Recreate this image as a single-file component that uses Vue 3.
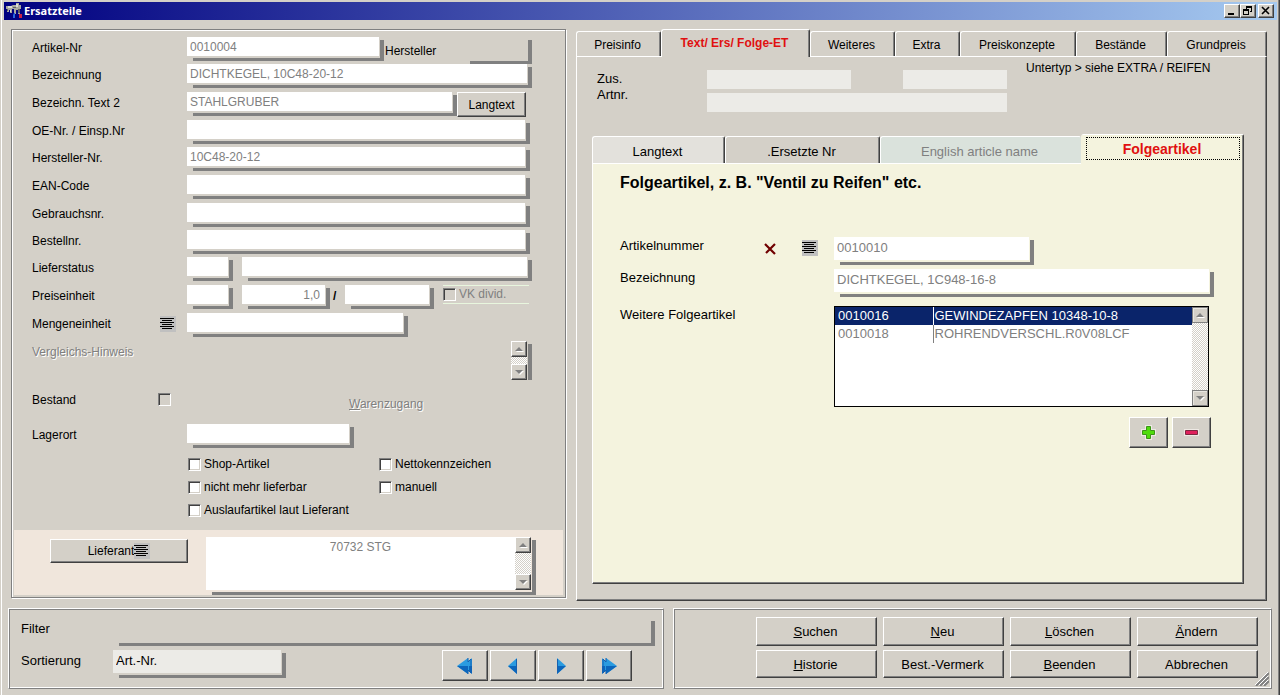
<script setup>
import { ref } from 'vue'

const plainRows = [
  { id: 'oe', label: 'OE-Nr. / Einsp.Nr', value: '' },
  { id: 'herstnr', label: 'Hersteller-Nr.', value: '10C48-20-12' },
  { id: 'ean', label: 'EAN-Code', value: '' },
  { id: 'gebrauch', label: 'Gebrauchsnr.', value: '' },
  { id: 'bestell', label: 'Bestellnr.', value: '' },
]
const flags = [
  { id: 'shop', label: 'Shop-Artikel' },
  { id: 'netto', label: 'Nettokennzeichen' },
  { id: 'nml', label: 'nicht mehr lieferbar' },
  { id: 'manuell', label: 'manuell' },
  { id: 'auslauf', label: 'Auslaufartikel laut Lieferant' },
]
const tabs = ['Preisinfo', 'Text/ Ers/ Folge-ET', 'Weiteres', 'Extra', 'Preiskonzepte', 'Bestände', 'Grundpreis']
const activeTab = ref(1)
const subTabs = ['Langtext', '.Ersetzte Nr', 'English article name', 'Folgeartikel']
const activeSub = ref(3)
const supplier = ref('70732 STG')
const followers = [
  { nr: '0010016', name: 'GEWINDEZAPFEN 10348-10-8' },
  { nr: '0010018', name: 'ROHRENDVERSCHL.R0V08LCF' },
]
const selected = ref(0)
const actions = [
  ['S', 'uchen'], ['N', 'eu'], ['L', 'öschen'], ['Ä', 'ndern'],
  ['H', 'istorie'], ['', 'Best.-Vermerk'], ['B', 'eenden'], ['', 'Abbrechen'],
]
const nav = [
  { label: 'Erster', dir: 'left', double: true },
  { label: 'Zurück', dir: 'left', double: false },
  { label: 'Weiter', dir: 'right', double: false },
  { label: 'Letzter', dir: 'right', double: true },
]
</script>

<template>
  <div class="window">
    <header class="titlebar">
      <svg class="app-icon" width="16" height="16" viewBox="0 0 16 16" aria-hidden="true">
        <path d="M0 3h5l2-1h3V0h3v2h2v4h-1v5h-2V7h-2v4H8V6H6v4H4V7H3v2H1V6H0z" fill="#a8a8a0" />
        <path d="M2 3h4v2H2zM10 1h2v3h-2zM4 7h1v2H4z" fill="#dcdcd4" />
        <path d="M1 6h1v2H1zM7 4h3v1H7zM12 6h2v4h-2z" fill="#606068" />
        <path d="M8 10h1v5H7v-3z" fill="#2868e0" />
        <path d="M13 11h3v4h-3z" fill="#c82048" />
      </svg>
      <h1>Ersatzteile</h1>
      <div class="win-buttons">
        <button type="button" aria-label="Minimieren">
          <svg width="12" height="10" viewBox="0 0 12 10"><path d="M2 7h6v2H2z" /></svg>
        </button>
        <button type="button" aria-label="Wiederherstellen">
          <svg width="12" height="10" viewBox="0 0 12 10">
            <path d="M4 0h6v6H8V5h1V2H5v1H4zM1 3h6v6H1zM2 5v3h4V5z" fill-rule="evenodd" />
          </svg>
        </button>
        <button type="button" class="close" aria-label="Schließen">
          <svg width="12" height="10" viewBox="0 0 12 10"><path d="M2 1l7 7M9 1L2 8" stroke="#000" stroke-width="1.600" /></svg>
        </button>
      </div>
    </header>

    <main class="main">
      <section class="article">
        <div class="form">
          <label for="artnr">Artikel-Nr</label>
          <div class="cell">
            <span class="field w-art"><input id="artnr" value="0010004" readonly></span>
            <label for="hersteller" class="inner-label">Hersteller</label>
            <span class="field ghost push w-herst"><input id="hersteller" readonly></span>
          </div>

          <label for="bez">Bezeichnung</label>
          <div class="cell"><span class="field grow"><input id="bez" value="DICHTKEGEL, 10C48-20-12" readonly></span></div>

          <label for="bez2">Bezeichn. Text 2</label>
          <div class="cell">
            <span class="field grow"><input id="bez2" value="STAHLGRUBER" readonly></span>
            <button type="button" class="btn langtext">Langtext</button>
          </div>

          <template v-for="r in plainRows" :key="r.id">
            <label :for="r.id">{{ r.label }}</label>
            <div class="cell short"><span class="field grow"><input :id="r.id" :value="r.value" readonly></span></div>
          </template>

          <label for="lstatus">Lieferstatus</label>
          <div class="cell gap">
            <span class="field w-code"><input id="lstatus" readonly></span>
            <span class="field grow"><input aria-label="Lieferstatus Text" readonly></span>
          </div>

          <label for="preis">Preiseinheit</label>
          <div class="cell gap">
            <span class="field w-code"><input id="preis" readonly></span>
            <span class="field w-price"><input class="right" aria-label="Preiseinheit Faktor" value="1,0" readonly></span>
            <span class="slash">/</span>
            <span class="field grow"><input aria-label="Preiseinheit Divisor" readonly></span>
            <label class="divid"><input type="checkbox" class="check dim" disabled><span>VK divid.</span></label>
          </div>

          <div class="label-with-icon">
            <label for="menge">Mengeneinheit</label>
            <button type="button" class="list-icon" aria-label="Mengeneinheit wählen">
              <svg width="16" height="16" viewBox="0 0 16 16"><path d="M0 2h14v1H0zM2 4h10v1H2zM0 6h14v1H0zM2 8h10v1H2zM0 10h14v1H0zM2 12h10v1H2z" /></svg>
            </button>
          </div>
          <div class="cell"><span class="field w-menge"><input id="menge" readonly></span></div>

          <label for="hinweis" class="off">Vergleichs-Hinweis</label>
          <div class="cell">
            <span class="field ghost grow memo">
              <textarea id="hinweis" readonly></textarea>
              <span class="scroll">
                <button type="button" aria-label="Nach oben"><svg width="8" height="4" viewBox="0 0 8 4"><path d="M0 4l4-4 4 4z" /></svg></button>
                <button type="button" aria-label="Nach unten"><svg width="8" height="4" viewBox="0 0 8 4"><path d="M0 0l4 4 4-4z" /></svg></button>
              </span>
            </span>
          </div>

          <div class="label-with-icon">
            <label for="bestand">Bestand</label>
            <input id="bestand" type="checkbox" class="check dim stock">
          </div>
          <div class="cell"><a href="#" class="off stock-link"><u>W</u>arenzugang</a></div>

          <label for="lager">Lagerort</label>
          <div class="cell"><span class="field w-lager"><input id="lager" readonly></span></div>

          <div class="flags">
            <label v-for="f in flags" :key="f.id"><input type="checkbox" class="check">{{ f.label }}</label>
          </div>
        </div>

        <div class="supplier">
          <button type="button" class="btn supplier-btn">
            Lieferant
            <svg class="list-glyph" width="16" height="16" viewBox="0 0 16 16"><path d="M0 2h14v1H0zM2 4h10v1H2zM0 6h14v1H0zM2 8h10v1H2zM0 10h14v1H0zM2 12h10v1H2z" /></svg>
          </button>
          <span class="field grow memo">
            <textarea v-model="supplier" aria-label="Lieferant" class="center" readonly></textarea>
            <span class="scroll">
              <button type="button" aria-label="Nach oben"><svg width="8" height="4" viewBox="0 0 8 4"><path d="M0 4l4-4 4 4z" /></svg></button>
              <button type="button" aria-label="Nach unten"><svg width="8" height="4" viewBox="0 0 8 4"><path d="M0 0l4 4 4-4z" /></svg></button>
            </span>
          </span>
        </div>
      </section>

      <section class="details">
        <div class="tabs" role="tablist">
          <button v-for="(t, i) in tabs" :key="t" type="button" role="tab" class="tab"
            :class="{ active: i === activeTab }" :aria-selected="i === activeTab" @click="activeTab = i">{{ t }}</button>
        </div>
        <div class="page">
          <div class="extra">
            <label for="zus">Zus.<br>Artnr.</label>
            <div class="extra-fields">
              <input id="zus" class="flat a" readonly>
              <input class="flat b" aria-label="Zusatz 2" readonly>
              <input class="flat c" aria-label="Zusatz 3" readonly>
            </div>
            <p>Untertyp &gt; siehe EXTRA / REIFEN</p>
          </div>

          <div class="subtabs" role="tablist">
            <button v-for="(t, i) in subTabs" :key="t" type="button" role="tab" class="tab sub"
              :class="{ active: i === activeSub, light: i === 0, mint: i === 2 }"
              :aria-selected="i === activeSub" @click="activeSub = i"><span>{{ t }}</span></button>
          </div>
          <div class="subpage">
            <h2>Folgeartikel, z. B. "Ventil zu Reifen" etc.</h2>
            <div class="follow">
              <label for="fnr">Artikelnummer</label>
              <button type="button" class="delete" aria-label="Löschen">
                <svg width="13" height="13" viewBox="0 0 13 13"><path d="M1 2l10 10M11 2L2 11" stroke="#700000" stroke-width="2.200" /></svg>
              </button>
              <button type="button" class="list-icon" aria-label="Artikel wählen">
                <svg width="16" height="16" viewBox="0 0 16 16"><path d="M0 2h14v1H0zM2 4h10v1H2zM0 6h14v1H0zM2 8h10v1H2zM0 10h14v1H0zM2 12h10v1H2z" /></svg>
              </button>
              <span class="field tall w-fnr"><input id="fnr" value="0010010" readonly></span>

              <label for="fbez" class="span3">Bezeichnung</label>
              <span class="field tall"><input id="fbez" value="DICHTKEGEL, 1C948-16-8" readonly></span>

              <span id="more-label" class="span3 list-label">Weitere Folgeartikel</span>
              <div class="list-block">
                <div class="listbox">
                  <table aria-labelledby="more-label">
                    <tbody>
                      <tr v-for="(f, i) in followers" :key="f.nr" :class="{ selected: i === selected }" @click="selected = i">
                        <td class="nr">{{ f.nr }}</td>
                        <td>{{ f.name }}</td>
                      </tr>
                    </tbody>
                  </table>
                  <span class="scroll flat-scroll">
                    <button type="button" aria-label="Nach oben"><svg width="8" height="4" viewBox="0 0 8 4"><path d="M0 4l4-4 4 4z" /></svg></button>
                    <button type="button" aria-label="Nach unten"><svg width="8" height="4" viewBox="0 0 8 4"><path d="M0 0l4 4 4-4z" /></svg></button>
                  </span>
                </div>
                <div class="list-actions">
                  <button type="button" class="btn" aria-label="Hinzufügen">
                    <svg width="15" height="15" viewBox="0 0 15 15">
                      <path d="M4 0h7v4h4v7h-4v4H4v-4H0V4h4z" fill="#eee9e4" />
                      <path d="M5.500 1.500h4v4h4v4h-4v4h-4v-4h-4v-4h4z" fill="#4fdc0c" stroke="#3c9418" />
                    </svg>
                  </button>
                  <button type="button" class="btn" aria-label="Entfernen">
                    <svg width="15" height="15" viewBox="0 0 15 15">
                      <path d="M0 4h15v7H0z" fill="#eee9e4" />
                      <path d="M1.500 5.500h12v4h-12z" fill="#e0205c" stroke="#7c2840" />
                    </svg>
                  </button>
                </div>
              </div>
            </div>
          </div>
        </div>
      </section>
    </main>

    <footer class="bottom">
      <section class="ridge filterbar">
        <label for="filter">Filter</label>
        <span class="field ghost tall"><input id="filter" readonly></span>
        <label for="sort">Sortierung</label>
        <div class="sort-row">
          <span class="field tall sort"><select id="sort"><option>Art.-Nr.</option></select></span>
          <div class="nav">
            <button v-for="n in nav" :key="n.label" type="button" class="btn" :aria-label="n.label">
              <svg width="18" height="18" viewBox="0 0 18 18" :class="{ flip: n.dir === 'right' }">
                <template v-if="n.double">
                  <path d="M16 1v16l-3-3-5-5 5-5z" fill="#2a9be0" />
                  <path d="M16 9v8l-8-8z" fill="#0c66bc" />
                  <path d="M12 1v3l1-1v12l-1-1v3L1 9z" fill="#2a9be0" />
                  <path d="M12 9v8L1 9z" fill="#0c66bc" />
                  <path d="M12 1v4l3-3v14l-3-3v4" fill="none" stroke="#1560b0" />
                </template>
                <template v-else>
                  <path d="M13 1v16L4 9z" fill="#2a9be0" />
                  <path d="M13 9v8L4 9z" fill="#0c66bc" />
                  <path d="M12.500 2v14" stroke="#1560b0" />
                </template>
              </svg>
            </button>
          </div>
        </div>
      </section>
      <section class="ridge actions">
        <button v-for="a in actions" :key="a[1]" type="button" class="btn"><u>{{ a[0] }}</u>{{ a[1] }}</button>
        <svg class="grip" width="14" height="14" viewBox="0 0 14 14" aria-hidden="true">
          <path d="M1 14L14 1M5 14l9-9M9 14l5-5" stroke="#808080" stroke-width="2" />
          <path d="M0 13L13 0M4 13l9-9M8 13l5-5" stroke="#fff" />
        </svg>
      </section>
    </footer>
  </div>
</template>

<style>
body { margin: 0; background: #d4d0c8; }
</style>

<style scoped>
* { box-sizing: border-box; }
.window {
  min-height: 100vh;
  display: flex;
  flex-direction: column;
  padding: 2px 2px 6px 3px;
  background: #d4d0c8;
  border-left: 1px solid #d4d0c8;
  border-right: 1px solid #404040;
  box-shadow: inset 1px 0 #fff, inset -1px 0 #808080;
  font-family: "Liberation Sans", Arial, sans-serif;
  font-size: 12px;
  color: #000;
}
button, input, textarea, select { font: inherit; color: inherit; margin: 0; border: 0; padding: 0; border-radius: 0; }
button svg { display: block; }

.titlebar {
  display: flex;
  align-items: center;
  height: 18px;
  padding: 0 3px 0 2px;
  background: linear-gradient(to right, #000080, #a6caf0);
}
h1 { margin: 0 0 0 2px; font: bold 11px/18px "Noto Sans", "Open Sans", sans-serif; color: #fff; }
.win-buttons { display: flex; margin-left: auto; }
.win-buttons button {
  width: 16px;
  height: 14px;
  padding: 1px;
  background: #d4d0c8;
  border: 1px solid;
  border-color: #fff #404040 #404040 #fff;
  box-shadow: inset -1px -1px #808080;
}
.win-buttons .close { margin-left: 2px; }

.main {
  flex: 1;
  display: grid;
  grid-template-columns: 555fr 691fr;
  gap: 10px;
  padding: 9px 10px 0 7px;
}

.article {
  display: flex;
  flex-direction: column;
  margin-bottom: 3px;
  border: 1px solid #808080;
  box-shadow: 1px 1px #fff, inset 1px 1px #fff;
}
.form {
  display: grid;
  grid-template-columns: 155px 1fr;
  grid-template-rows: 27px 28px 28px 27px 28px 28px 27px 27px 28px 28px 28px 48px 35px 33px auto;
  padding: 3px 33px 0 20px;
}
.form label { line-height: 30px; height: 28px; white-space: nowrap; }
.cell { display: flex; align-items: flex-start; padding-top: 4px; }
.cell.short { padding-right: 2px; }
.cell.gap { gap: 9px; }
.label-with-icon { display: flex; justify-content: space-between; padding-right: 11px; }
.list-icon { width: 16px; height: 16px; background: #c0c0c0; }
.label-with-icon .list-icon { margin-top: 7px; }

.field {
  display: flex;
  height: 24px;
  padding: 0 5px 5px 0;
  background:
    linear-gradient(#808080, #808080) right bottom / 4px calc(100% - 3px) no-repeat,
    linear-gradient(#808080, #808080) right bottom / calc(100% - 6px) 3px no-repeat;
}
.field input, .field textarea, .field select {
  flex: 1;
  min-width: 0;
  width: 100%;
  height: 100%;
  padding: 0 3px;
  background: #fff;
  color: #808080;
  outline: none;
  resize: none;
  appearance: none;
}
.field.ghost input, .field.ghost textarea { background: transparent; }
.field input.right { text-align: right; padding-right: 5px; }
.field.tall { height: 28px; font-size: 13px; }
.follow .field.tall input { padding-bottom: 2px; }
.grow { flex: 1; min-width: 0; }
.w-art { width: 197px; }
.w-herst { width: 68px; }
.push { margin-left: auto; }
.w-code { width: 46px; }
.w-price { width: 88px; }
.w-menge { width: 221px; }
.w-lager { width: 167px; }
.field.w-herst { height: 27px; }
.form .inner-label { padding-left: 1px; line-height: 28px; }
.langtext { width: 69px; height: 25px; margin-right: 6px; }
.slash { width: 0; flex: 0 0 auto; margin: 4px 3px 0 -6px; font-weight: bold; }

.btn {
  display: flex;
  align-items: center;
  justify-content: center;
  background: #d4d0c8;
  border: 1px solid;
  border-color: #fff #404040 #404040 #fff;
  box-shadow: inset -1px -1px #808080;
}

.check {
  appearance: none;
  flex: none;
  width: 13px;
  height: 13px;
  background: #fff;
  border: 1px solid;
  border-color: #808080 #fff #fff #808080;
  box-shadow: inset 1px 1px #404040, inset -1px -1px #d4d0c8;
}
.check.dim { background: #d4d0c8; }
.form .divid {
  display: flex;
  align-items: center;
  gap: 3px;
  width: 86px;
  height: 19px;
  margin-right: 3px;
  line-height: 17px;
  color: #808080;
  border-top: 1px solid #e8f6de;
  border-bottom: 1px solid #e8f6de;
}
.off { color: #808080; text-shadow: 1px 1px #fff; }
.stock { margin-top: 8px; margin-right: 5px; }
.stock-link { margin: 8px 0 0 162px; text-decoration: none; }

.memo textarea { line-height: 20px; overflow: hidden; }
.form .memo { height: 39px; padding-bottom: 0; background: linear-gradient(#808080, #808080) right bottom / 4px calc(100% - 3px) no-repeat; }
.memo .center { text-align: center; }
.scroll {
  display: flex;
  flex: none;
  flex-direction: column;
  justify-content: space-between;
  width: 16px;
  background: repeating-conic-gradient(#fff 0 25%, #d4d0c8 0 50%) 0 0 / 2px 2px;
}
.scroll button {
  display: flex;
  align-items: center;
  justify-content: center;
  width: 16px;
  height: 16px;
  background: #d4d0c8;
  border: 1px solid;
  border-color: #fff #404040 #404040 #fff;
  box-shadow: inset -1px -1px #808080;
}
.scroll svg { fill: #808080; filter: drop-shadow(1px 1px #fff); }
.flat-scroll button { border-color: #808080; box-shadow: inset 1px 1px #e8e6e0; }

.flags {
  grid-column: 2;
  display: grid;
  grid-template-columns: 191px 1fr;
  grid-auto-rows: 23px;
  padding-left: 1px;
}
.flags label { display: flex; align-items: center; gap: 3px; height: 23px; line-height: 23px; }

.supplier {
  flex: 1;
  display: flex;
  align-items: flex-start;
  gap: 18px;
  margin: 8px 2px 2px;
  padding: 7px 27px 0 36px;
  background: #f0e6dc;
}
.supplier-btn { width: 138px; height: 24px; margin-top: 2px; }
.list-glyph { background: #c0c0c0; }
.supplier .memo { height: 58px; }

.details { display: flex; flex-direction: column; }
.tabs {
  display: grid;
  grid-template-columns: 85fr 149fr 85fr 65fr 116fr 91fr 100fr;
  align-items: end;
}
.tab {
  height: 25px;
  padding: 2px 2px 0 0;
  background: #d4d0c8;
  border: 1px solid;
  border-color: #fff #404040 transparent #fff;
  border-bottom: 0;
  border-radius: 3px 2px 0 0;
  box-shadow: inset -1px 0 #808080;
  white-space: nowrap;
}
.tabs .active { height: 28px; margin-bottom: -1px; padding-top: 0; padding-bottom: 2px; color: #e01010; font-weight: bold; z-index: 1; }
.page {
  flex: 1;
  display: flex;
  flex-direction: column;
  padding: 13px 22px 16px 15px;
  border: 1px solid;
  border-color: #fff #404040 #404040 #fff;
  box-shadow: inset -1px -1px #808080;
}
.extra { display: flex; height: 64px; padding-left: 5px; }
.extra label { width: 110px; padding-top: 1px; font-size: 13px; line-height: 16px; }
.extra-fields {
  display: grid;
  grid-template-columns: 144px 104px;
  grid-auto-rows: 19px;
  gap: 4px 52px;
  flex: none;
}
.flat { width: 100%; background: #ecebe7; outline: none; }
.flat.c { grid-column: 1 / 3; }
.extra p { margin: -10px 0 0 19px; line-height: 16px; white-space: nowrap; }

.subtabs {
  display: grid;
  grid-template-columns: 133fr 155fr 201fr 163fr;
  align-items: end;
}
.tab.sub { height: 27px; font-size: 13px; }
.sub.light { background: #e3e1dc; }
.sub.mint { background: #dae2dc; color: #808080; box-shadow: none; border-right-color: #dae2dc; }
.subtabs .tab.active {
  height: 30px;
  margin-bottom: -1px;
  padding: 2px 3px 4px 4px;
  background: #f4f3de;
  color: #e01010;
  font-weight: bold;
  font-size: 14px;
  border-left-color: #f4f3de;
  z-index: 1;
}
.subtabs .active span { display: flex; align-items: center; justify-content: center; height: 100%; padding-right: 2px; border: 1px dotted #000; }
.subpage {
  flex: 1;
  padding: 8px 29px 20px 27px;
  background: #f4f3de;
  border: 1px solid;
  border-color: #fff #404040 #404040 #fff;
  box-shadow: inset -1px -1px #808080;
  font-size: 13px;
}
h2 { margin: 0 0 43px; font-size: 16px; line-height: 22px; }
.follow {
  display: grid;
  grid-template-columns: 144px 38px 32px 1fr;
  grid-template-rows: 32px 37px auto;
  align-items: start;
}
.follow label, .list-label { line-height: 18px; }
.span3 { grid-column: 1 / 4; }
.follow .list-icon { margin-top: 3px; }
.delete { width: 13px; height: 13px; margin-top: 5px; background: transparent; }
.w-fnr { width: 200px; }
.list-block { padding-right: 5px; }
.listbox { display: flex; height: 101px; border: 1px solid #000; background: #fff; }
table { flex: 1; align-self: flex-start; border-collapse: collapse; color: #808080; }
td { height: 18px; padding: 0 1px; line-height: 18px; white-space: nowrap; }
.nr { width: 98px; padding-left: 3px; border-right: 1px solid #808080; }
.selected { background: #0a246a; color: #fff; }
.selected .nr { border-right-color: #fff; }
.list-actions { display: flex; justify-content: flex-end; gap: 4px; margin: 10px -2px 0 0; }
.list-actions .btn { width: 39px; height: 31px; }

.bottom {
  display: grid;
  grid-template-columns: 656fr 599fr;
  gap: 9px;
  padding: 7px 5px 0 4px;
  font-size: 13px;
}
.ridge {
  border: 1px solid;
  border-color: #fff #808080 #808080 #fff;
  box-shadow: inset 1px 1px #808080, inset -1px -1px #fff;
}
.filterbar {
  display: grid;
  grid-template-columns: 92px 1fr;
  grid-template-rows: 27px 32px;
  row-gap: 5px;
  padding: 9px 8px 6px 12px;
}
.filterbar label { line-height: 22px; }
.sort-row { display: flex; justify-content: space-between; padding-right: 23px; }
.sort { width: 173px; }
.field.sort select { background: #ecebe7; color: #000; padding-bottom: 2px; }
.nav { display: flex; gap: 2px; }
.nav .btn { width: 46px; height: 31px; }
.flip { transform: scaleX(-1); }
.actions {
  position: relative;
  display: grid;
  grid-template-columns: repeat(4, 121px);
  grid-template-rows: 29px 28px;
  gap: 4px 6px;
  justify-content: end;
  padding: 8px 13px 9px;
}
.actions .btn { padding-right: 2px; }
.grip { position: absolute; right: 2px; bottom: 2px; }
</style>
